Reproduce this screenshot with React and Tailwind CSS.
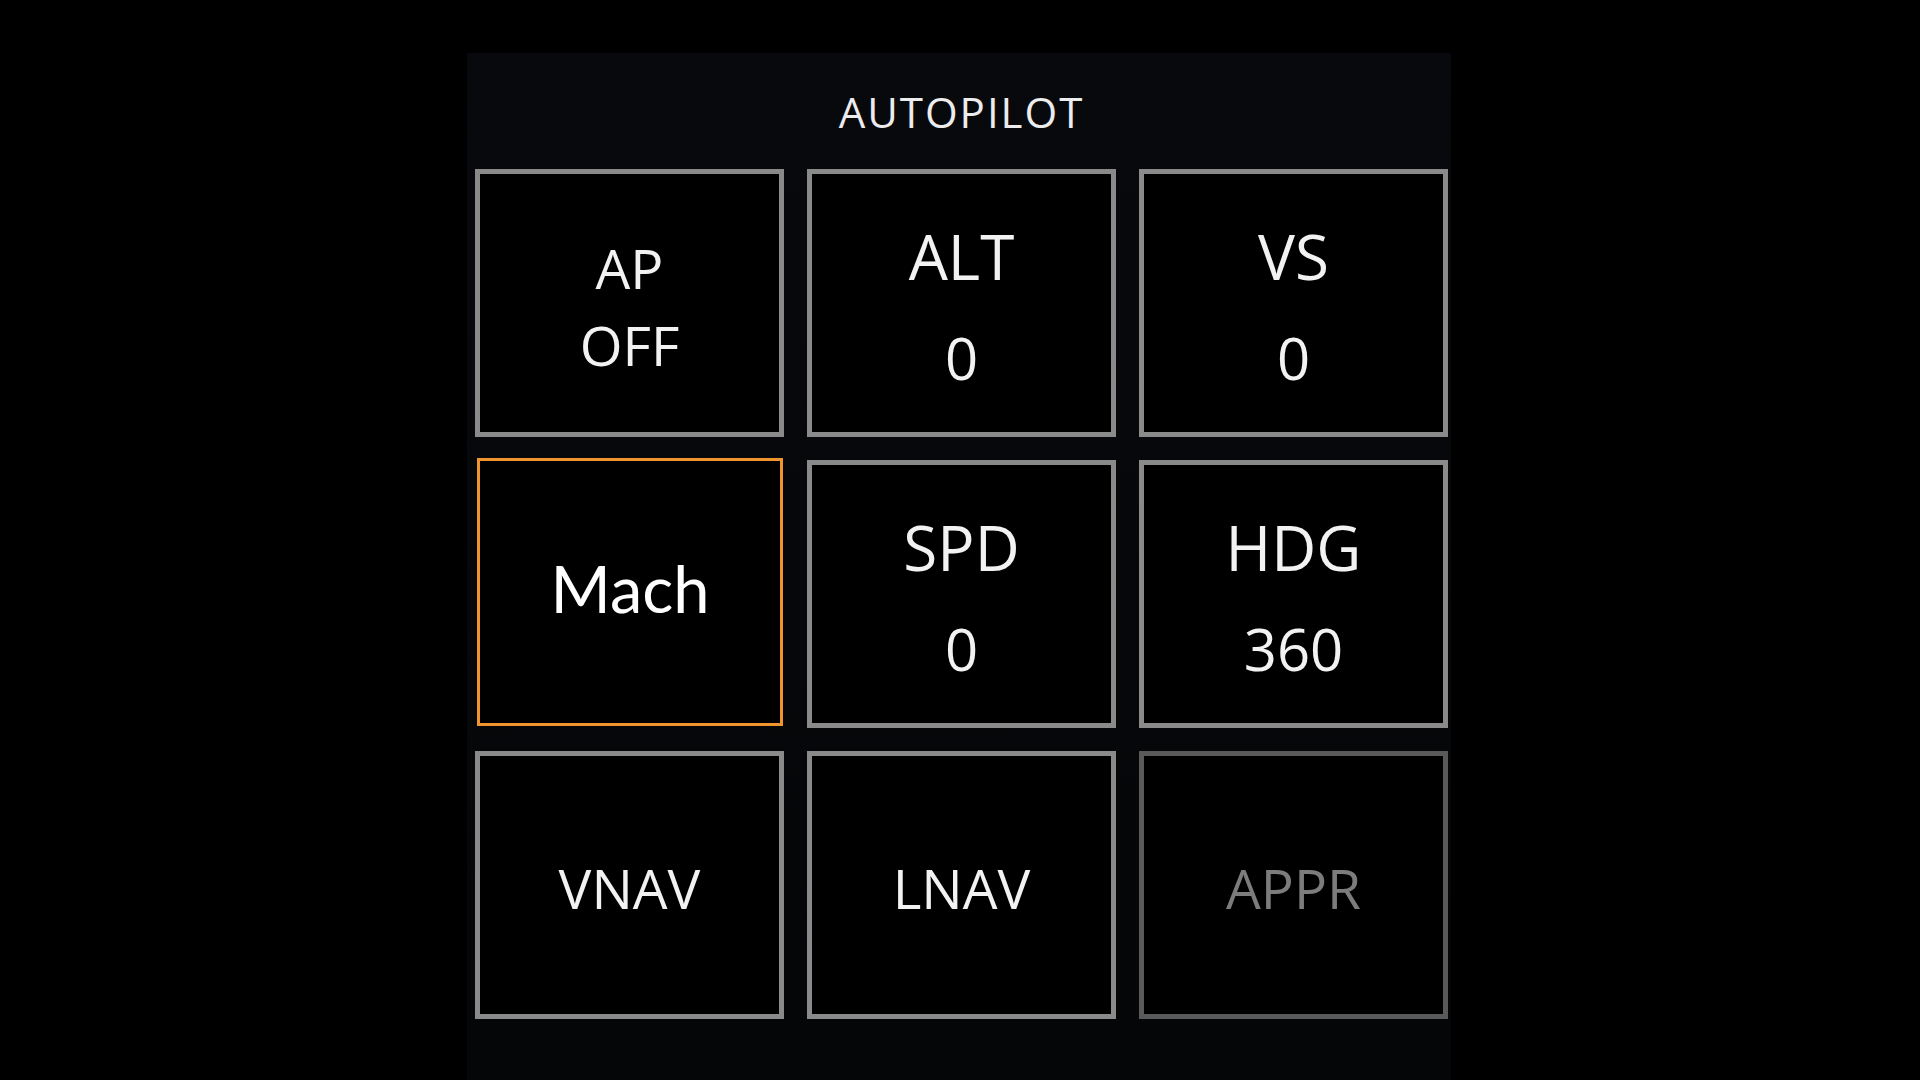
import React from 'react';

const font = { fontFamily: '"Open Sans", "Noto Sans", sans-serif' };

const ValueTile = ({ label, value }) => (
    <div className="h-[268px] border-[5px] border-[#8a8a8a] bg-black flex flex-col items-center justify-center pt-[5px] text-[#f2f2f2]">
        <div className="text-[62px] leading-[62px]">{label}</div>
        <div className="mt-[42px] text-[58px] leading-[58px]">{value}</div>
    </div>
);

const ModeTile = ({ label, dim }) => (
    <div className={`h-[268px] border-[5px] bg-black flex items-center justify-center pt-[5px] text-[55px] leading-[55px] ${
        dim ? 'border-[#5a5a5a] text-[#7c7c7c]' : 'border-[#8a8a8a] text-[#f2f2f2]'
    }`}>
        {label}
    </div>
);

export default function App() {
    return (
        <div className="min-h-screen w-full bg-black" style={font}>
            <div className="ml-[467px] w-[984px] min-h-screen pt-[53px]">
                <div className="bg-gradient-to-b from-[#08090c] to-[#050608] min-h-[1027px] pt-[38px] pl-[8px] pr-[3px]">
                    {/* header */}
                    <h1 className="text-center text-[42px] leading-[42px] tracking-[2px] text-[#ececec] font-normal mb-[36px]">
                        AUTOPILOT
                    </h1>

                    <div className="grid grid-cols-[309px_309px_309px] gap-x-[23px] gap-y-[23px]">
                        {/* AP toggle */}
                        <div className="h-[268px] border-[5px] border-[#8a8a8a] bg-black flex flex-col items-center justify-center pt-[5px] text-[#f2f2f2]">
                            <div className="text-[55px] leading-[55px]">AP</div>
                            <div className="mt-[22px] text-[55px] leading-[55px]">OFF</div>
                        </div>
                        <ValueTile label="ALT" value="0" />
                        <ValueTile label="VS" value="0" />

                        {/* selected: Mach */}
                        <div className="-mt-[2px] mb-[1px] ml-[2px] mr-[1px] h-[268px] border-[3px] border-[#f0952e] bg-black flex items-center justify-center pb-[8px]">
                            <span className="text-[65px] leading-[65px] text-white" style={{ fontFamily: 'Lato, "Open Sans", sans-serif' }}>
                                Mach
                            </span>
                        </div>
                        <ValueTile label="SPD" value="0" />
                        <ValueTile label="HDG" value="360" />

                        <ModeTile label="VNAV" />
                        <ModeTile label="LNAV" />
                        <ModeTile label="APPR" dim />
                    </div>
                </div>
            </div>
        </div>
    );
}
